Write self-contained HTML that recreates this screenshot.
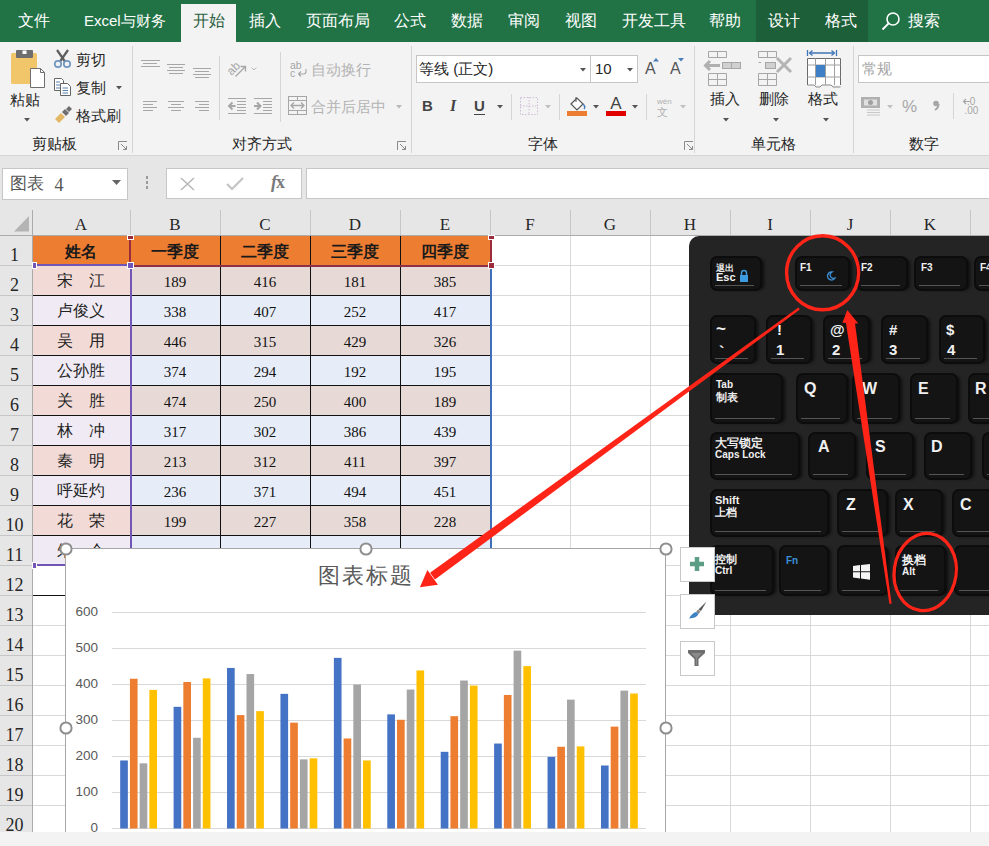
<!DOCTYPE html><html><head><meta charset="utf-8"><style>
body{margin:0;width:989px;height:846px;overflow:hidden;position:relative;background:#fff;font-family:"Liberation Sans",sans-serif}
.a{position:absolute}
.t{white-space:nowrap;line-height:1}
.srf{font-family:"Liberation Serif",serif}
</style></head><body><div class="a" style="left:0px;top:0px;width:989px;height:42px;background:#217346"></div><div class="a" style="left:756px;top:0px;width:112px;height:42px;background:#1d5f39"></div><div class="a" style="left:181px;top:4px;width:55px;height:38px;background:#f3f3f3"></div><div class="a t" style="left:18px;top:12.5px;font-size:15.5px;color:#fff">文件</div><div class="a t" style="left:84px;top:13px;font-size:15px;color:#fff">Excel与财务</div><div class="a t" style="left:193px;top:12.5px;font-size:15.5px;color:#2b5f3f">开始</div><div class="a t" style="left:249px;top:12.5px;font-size:15.5px;color:#fff">插入</div><div class="a t" style="left:306px;top:12.5px;font-size:15.5px;color:#fff">页面布局</div><div class="a t" style="left:394px;top:12.5px;font-size:15.5px;color:#fff">公式</div><div class="a t" style="left:451px;top:12.5px;font-size:15.5px;color:#fff">数据</div><div class="a t" style="left:508px;top:12.5px;font-size:15.5px;color:#fff">审阅</div><div class="a t" style="left:565px;top:12.5px;font-size:15.5px;color:#fff">视图</div><div class="a t" style="left:622px;top:12.5px;font-size:15.5px;color:#fff">开发工具</div><div class="a t" style="left:709px;top:12.5px;font-size:15.5px;color:#fff">帮助</div><div class="a t" style="left:768px;top:12.5px;font-size:15.5px;color:#fff">设计</div><div class="a t" style="left:825px;top:12.5px;font-size:15.5px;color:#fff">格式</div><div class="a t" style="left:908px;top:12.5px;font-size:15.5px;color:#fff">搜索</div><svg class="a" style="left:880px;top:11px" width="22" height="22"><circle cx="13" cy="8" r="6" fill="none" stroke="#fff" stroke-width="1.6"/><line x1="8.5" y1="12.5" x2="2.5" y2="18.5" stroke="#fff" stroke-width="1.8"/></svg><div class="a" style="left:0px;top:42px;width:989px;height:113px;background:#f3f3f3"></div><div class="a" style="left:0px;top:155px;width:989px;height:1px;background:#d6d6d6"></div><div class="a" style="left:132px;top:46px;width:1px;height:107px;background:#d5d5d5"></div><div class="a" style="left:411px;top:46px;width:1px;height:107px;background:#d5d5d5"></div><div class="a" style="left:694px;top:46px;width:1px;height:107px;background:#d5d5d5"></div><div class="a" style="left:853px;top:46px;width:1px;height:107px;background:#d5d5d5"></div><svg class="a" style="left:8px;top:48px" width="40" height="42"><rect x="3" y="5" width="26" height="31" rx="1.5" fill="#f1c66b"/><rect x="8" y="2" width="17" height="8" rx="1" fill="#6e6e6e"/><rect x="14.5" y="2.5" width="4" height="3.5" fill="#fff"/><path d="M22.5 20.5H32.5L36.5 24.5V39.5H22.5Z" fill="#fff" stroke="#6e6e6e"/><path d="M32.5 20.5V24.5H36.5" fill="none" stroke="#6e6e6e"/></svg><div class="a t" style="left:10px;top:92px;font-size:15px;color:#262626">粘贴</div><svg class="a" style="left:24px;top:118px" width="6" height="4"><polygon points="0,0 6,0 3.0,3.5" fill="#555"/></svg><svg class="a" style="left:53px;top:49px" width="19" height="20"><path d="M4 1L12 12.5M15 1L7 12.5" stroke="#5e5e5e" stroke-width="2.2" fill="none"/><circle cx="5" cy="15" r="3.2" fill="none" stroke="#7096c2" stroke-width="1.7"/><circle cx="14" cy="15" r="3.2" fill="none" stroke="#7096c2" stroke-width="1.7"/></svg><div class="a t" style="left:76px;top:52px;font-size:15px;color:#262626">剪切</div><svg class="a" style="left:53px;top:77px" width="20" height="20"><path d="M1.5 1.5H8.5L10.5 3.5V13.5H1.5Z" fill="#fff" stroke="#666"/><path d="M7.5 6.5H14.5L17.5 9.5V18.5H7.5Z" fill="#fff" stroke="#666"/><path d="M3 5H7M3 8H7M3 11H7M9.5 11H15M9.5 13.5H15M9.5 16H15" stroke="#5a7fa8" stroke-width="1"/></svg><div class="a t" style="left:76px;top:80px;font-size:15px;color:#262626">复制</div><svg class="a" style="left:116px;top:86px" width="6" height="4"><polygon points="0,0 6,0 3.0,3.5" fill="#555"/></svg><svg class="a" style="left:54px;top:106px" width="18" height="18"><path d="M1 13L7 7L11 11L5 17Z" fill="#e2b864"/><path d="M8 6L11 3L15 7L12 10Z" fill="#6e6e6e"/><path d="M12 3L15 0L18 3L15 6Z" fill="#6e6e6e"/></svg><div class="a t" style="left:76px;top:107.5px;font-size:15px;color:#262626">格式刷</div><div class="a t" style="left:4.0px;top:136px;width:100px;text-align:center;font-size:15px;color:#262626">剪贴板</div><svg class="a" style="left:118px;top:141px" width="10" height="10"><path d="M0.5 9V0.5H9" fill="none" stroke="#8a8a8a"/><path d="M3 3L8.5 8.5M5 8.5H8.5V5" fill="none" stroke="#8a8a8a"/></svg><div class="a" style="left:141px;top:60px;width:19px;height:1px;background:#a6a6a6"></div><div class="a" style="left:143px;top:63px;width:14px;height:1px;background:#a6a6a6"></div><div class="a" style="left:141px;top:66px;width:19px;height:1px;background:#a6a6a6"></div><div class="a" style="left:167px;top:64px;width:18px;height:1px;background:#a6a6a6"></div><div class="a" style="left:169px;top:67px;width:14px;height:1px;background:#a6a6a6"></div><div class="a" style="left:167px;top:70px;width:18px;height:1px;background:#a6a6a6"></div><div class="a" style="left:169px;top:73px;width:14px;height:1px;background:#a6a6a6"></div><div class="a" style="left:193px;top:68px;width:18px;height:1px;background:#a6a6a6"></div><div class="a" style="left:195px;top:71px;width:14px;height:1px;background:#a6a6a6"></div><div class="a" style="left:193px;top:74px;width:18px;height:1px;background:#a6a6a6"></div><div class="a" style="left:195px;top:77px;width:14px;height:1px;background:#a6a6a6"></div><div class="a" style="left:143px;top:101px;width:14px;height:1px;background:#a6a6a6"></div><div class="a" style="left:143px;top:104px;width:10px;height:1px;background:#a6a6a6"></div><div class="a" style="left:143px;top:107px;width:14px;height:1px;background:#a6a6a6"></div><div class="a" style="left:143px;top:110px;width:10px;height:1px;background:#a6a6a6"></div><div class="a" style="left:168px;top:101px;width:16px;height:1px;background:#a6a6a6"></div><div class="a" style="left:171px;top:104px;width:10px;height:1px;background:#a6a6a6"></div><div class="a" style="left:168px;top:107px;width:16px;height:1px;background:#a6a6a6"></div><div class="a" style="left:171px;top:110px;width:10px;height:1px;background:#a6a6a6"></div><div class="a" style="left:195px;top:101px;width:14px;height:1px;background:#a6a6a6"></div><div class="a" style="left:199px;top:104px;width:10px;height:1px;background:#a6a6a6"></div><div class="a" style="left:195px;top:107px;width:14px;height:1px;background:#a6a6a6"></div><div class="a" style="left:199px;top:110px;width:10px;height:1px;background:#a6a6a6"></div><div class="a" style="left:219px;top:56px;width:1px;height:64px;background:#d5d5d5"></div><div class="a" style="left:280px;top:52px;width:1px;height:70px;background:#d5d5d5"></div><svg class="a" style="left:224px;top:56px" width="26" height="24"><text x="0" y="0" font-size="12" fill="#a6a6a6" font-family="Liberation Sans" transform="translate(7.5 20) rotate(-45)">ab</text><path d="M11.5 20.5L21 11M16.5 10.5H21.5V15.5" stroke="#a6a6a6" stroke-width="1.3" fill="none"/></svg><svg class="a" style="left:251px;top:67px" width="6" height="5"><path d="M0.5 0.5L3 3L5.5 0.5" stroke="#b8b8b8" fill="none"/></svg><svg class="a" style="left:227px;top:97px" width="20" height="18"><path d="M1 1.5H19M10 4.5H19M10 7.5H19M10 10.5H19M10 13.5H19M1 16.5H19" stroke="#a6a6a6"/><path d="M8.5 9H2.5M5.5 5.5L2 9L5.5 12.5" stroke="#a6a6a6" stroke-width="2" fill="none"/></svg><svg class="a" style="left:253px;top:97px" width="20" height="18"><path d="M1 1.5H19M10 4.5H19M10 7.5H19M10 10.5H19M10 13.5H19M1 16.5H19" stroke="#a6a6a6"/><path d="M1 9H7M4 5.5L7.5 9L4 12.5" stroke="#a6a6a6" stroke-width="2" fill="none"/></svg><svg class="a" style="left:289px;top:59px" width="20" height="20"><text x="1" y="9.5" font-size="10.5" fill="#a6a6a6" font-family="Liberation Sans">ab</text><text x="1" y="17.5" font-size="10.5" fill="#a6a6a6" font-family="Liberation Sans">c</text><path d="M17 10V12.5Q17 15 14.5 15H9.5M12 12.5L9.5 15L12 17.5" stroke="#a6a6a6" fill="none" stroke-width="1.1"/></svg><div class="a t" style="left:311px;top:62px;font-size:15px;color:#b3b3b3">自动换行</div><svg class="a" style="left:288px;top:96px" width="20" height="20"><rect x="0.5" y="0.5" width="18" height="18" fill="none" stroke="#a6a6a6"/><path d="M0 4.5H19M0 14.5H19M9.5 0V4.5M9.5 14.5V19" stroke="#a6a6a6"/><path d="M3 9.5H16M6 6.5L3 9.5L6 12.5M13 6.5L16 9.5L13 12.5" stroke="#a6a6a6" fill="none" stroke-width="1.3"/></svg><div class="a t" style="left:311px;top:99px;font-size:15px;color:#b3b3b3">合并后居中</div><svg class="a" style="left:396px;top:105px" width="6" height="4"><polygon points="0,0 6,0 3.0,3.5" fill="#b8b8b8"/></svg><div class="a t" style="left:202.0px;top:136px;width:120px;text-align:center;font-size:15px;color:#262626">对齐方式</div><svg class="a" style="left:397px;top:141px" width="10" height="10"><path d="M0.5 9V0.5H9" fill="none" stroke="#8a8a8a"/><path d="M3 3L8.5 8.5M5 8.5H8.5V5" fill="none" stroke="#8a8a8a"/></svg><div class="a" style="left:416px;top:55px;width:175px;height:28px;background:#fff;border:1px solid #c6c6c6;box-sizing:border-box"></div><div class="a" style="left:591px;top:55px;width:47px;height:28px;background:#fff;border:1px solid #c6c6c6;border-left:none;box-sizing:border-box"></div><div class="a t" style="left:419px;top:61px;font-size:15px;color:#262626">等线 (正文)</div><svg class="a" style="left:580px;top:68px" width="6" height="4"><polygon points="0,0 6,0 3.0,3.5" fill="#555"/></svg><div class="a t" style="left:595px;top:61px;font-size:15px;color:#262626">10</div><svg class="a" style="left:627px;top:68px" width="6" height="4"><polygon points="0,0 6,0 3.0,3.5" fill="#555"/></svg><div class="a t" style="left:645px;top:61px;font-size:16px;color:#555">A</div><div class="a t" style="left:670px;top:61px;font-size:16px;color:#555">A</div><svg class="a" style="left:653px;top:58px" width="6" height="4"><polygon points="0,3.5 6,3.5 3,0" fill="#4a7ebb"/></svg><svg class="a" style="left:678px;top:58px" width="6" height="4"><polygon points="0,0 6,0 3,3.5" fill="#4a7ebb"/></svg><div class="a t" style="left:422px;top:98px;font-size:15px;font-weight:bold;color:#444">B</div><div class="a t" style="left:450px;top:98px;font-size:16px;font-weight:bold;font-style:italic;color:#444;font-family:'Liberation Serif',serif">I</div><div class="a t" style="left:474px;top:98px;font-size:15px;font-weight:bold;color:#444">U</div><div class="a" style="left:474px;top:114px;width:11px;height:1px;background:#444"></div><svg class="a" style="left:497px;top:105px" width="6" height="4"><polygon points="0,0 6,0 3.0,3.5" fill="#555"/></svg><div class="a" style="left:511px;top:94px;width:1px;height:26px;background:#d5d5d5"></div><svg class="a" style="left:520px;top:97px" width="18" height="18"><rect x="0.5" y="0.5" width="17" height="17" fill="none" stroke="#cdbfd7" stroke-dasharray="1.5 1.5"/><path d="M9 0V18M0 9H18" stroke="#cdbfd7" stroke-dasharray="1.5 1.5"/></svg><svg class="a" style="left:545px;top:105px" width="6" height="4"><polygon points="0,0 6,0 3.0,3.5" fill="#c0c0c0"/></svg><div class="a" style="left:559px;top:94px;width:1px;height:26px;background:#d5d5d5"></div><svg class="a" style="left:567px;top:96px" width="22" height="22"><path d="M4 8L10 2L16 8L10 14Z" fill="#fff" stroke="#555" stroke-width="1.2"/><path d="M9 1V6" stroke="#555"/><path d="M16 8Q19 11 17 13" stroke="#4a7ebb" stroke-width="1.5" fill="none"/><rect x="0" y="15" width="20" height="5" fill="#ed7d31"/></svg><svg class="a" style="left:593px;top:105px" width="6" height="4"><polygon points="0,0 6,0 3.0,3.5" fill="#555"/></svg><svg class="a" style="left:606px;top:95px" width="20" height="22"><text x="10" y="14" text-anchor="middle" font-size="17" fill="#444" font-family="Liberation Sans">A</text><rect x="0" y="16" width="20" height="5" fill="#e00000"/></svg><svg class="a" style="left:632px;top:105px" width="6" height="4"><polygon points="0,0 6,0 3.0,3.5" fill="#555"/></svg><div class="a" style="left:646px;top:94px;width:1px;height:26px;background:#d5d5d5"></div><div class="a t" style="left:657px;top:98px;font-size:8px;color:#b0b0b0">wén</div><div class="a t" style="left:657px;top:107px;font-size:11px;color:#b0b0b0">文</div><svg class="a" style="left:680px;top:105px" width="6" height="4"><polygon points="0,0 6,0 3.0,3.5" fill="#c0c0c0"/></svg><div class="a t" style="left:503.0px;top:136px;width:80px;text-align:center;font-size:15px;color:#262626">字体</div><svg class="a" style="left:684px;top:141px" width="10" height="10"><path d="M0.5 9V0.5H9" fill="none" stroke="#8a8a8a"/><path d="M3 3L8.5 8.5M5 8.5H8.5V5" fill="none" stroke="#8a8a8a"/></svg><svg class="a" style="left:700px;top:48px" width="46" height="42"><path d="M8.5 3.5H26.5V9.5H8.5ZM17.5 3.5V9.5" fill="none" stroke="#a6a6a6"/><rect x="22.5" y="14.5" width="18" height="6" fill="#d0d0d0" stroke="#a6a6a6"/><path d="M31.5 14.5V20.5" stroke="#a6a6a6"/><path d="M6 17.5H20M10 13L5.5 17.5L10 22" stroke="#b0b0b0" stroke-width="3" fill="none"/><path d="M8.5 25.5H26.5V37.5H8.5ZM17.5 25.5V37.5M8.5 31.5H26.5" fill="none" stroke="#a6a6a6"/></svg><div class="a t" style="left:710px;top:91px;font-size:15px;color:#262626">插入</div><svg class="a" style="left:723px;top:118px" width="6" height="4"><polygon points="0,0 6,0 3.0,3.5" fill="#555"/></svg><svg class="a" style="left:752px;top:48px" width="46" height="42"><path d="M6.5 3.5H24.5V9.5H6.5ZM15.5 3.5V9.5" fill="none" stroke="#a6a6a6"/><rect x="13.5" y="14.5" width="10" height="6" fill="#d0d0d0" stroke="#a6a6a6"/><path d="M6.5 14.5H9" stroke="#a6a6a6"/><path d="M25 10L39 24M39 10L25 24" stroke="#b4b4b4" stroke-width="3"/><path d="M6.5 25.5H24.5V37.5H6.5ZM15.5 25.5V37.5M6.5 31.5H24.5" fill="none" stroke="#a6a6a6"/></svg><div class="a t" style="left:759px;top:91px;font-size:15px;color:#262626">删除</div><svg class="a" style="left:773px;top:118px" width="6" height="4"><polygon points="0,0 6,0 3.0,3.5" fill="#555"/></svg><svg class="a" style="left:805px;top:48px" width="38" height="42"><path d="M5 5H29M2.5 2V8M31.5 2V8" stroke="#3f74b5" stroke-width="1.3" fill="none"/><path d="M7.5 2.5L4.5 5L7.5 7.5M26.5 2.5L29.5 5L26.5 7.5" stroke="#3f74b5" stroke-width="1.3" fill="none"/><path d="M2.5 37V10.5H35.5V37" fill="#fff" stroke="#6a6a6a"/><path d="M2.5 37H9L11 39H15L17 37H26L28 39H35.5" fill="none" stroke="#8a8a8a"/><path d="M10.5 10.5V37M20.5 10.5V37M29.5 10.5V37M2.5 17H35.5M2.5 29H35.5" stroke="#a0a0a0"/><rect x="11" y="17" width="9" height="12" fill="#3f7fc5"/></svg><div class="a t" style="left:808px;top:91px;font-size:15px;color:#262626">格式</div><svg class="a" style="left:823px;top:118px" width="6" height="4"><polygon points="0,0 6,0 3.0,3.5" fill="#555"/></svg><div class="a t" style="left:723.0px;top:136px;width:100px;text-align:center;font-size:15px;color:#262626">单元格</div><div class="a" style="left:858px;top:55px;width:140px;height:28px;background:#fff;border:1px solid #c6c6c6;box-sizing:border-box"></div><div class="a t" style="left:862px;top:61px;font-size:15px;color:#a6a6a6">常规</div><svg class="a" style="left:861px;top:96px" width="20" height="22"><rect x="0" y="1" width="19" height="11" fill="#b0b0b0"/><rect x="3" y="3.5" width="13" height="6" fill="#e0e0e0"/><circle cx="9.5" cy="6.5" r="2.5" fill="#a0a0a0"/><path d="M6 14H19M6 16.5H19M6 19H19" stroke="#c8c8c8"/></svg><svg class="a" style="left:887px;top:105px" width="6" height="4"><polygon points="0,0 6,0 3.0,3.5" fill="#c0c0c0"/></svg><div class="a t" style="left:902px;top:98px;font-size:17px;color:#a6a6a6">%</div><svg class="a" style="left:932px;top:100px" width="8" height="11"><circle cx="4" cy="3.5" r="2.8" fill="#a6a6a6"/><path d="M6.5 4Q6.5 8 3 10" stroke="#a6a6a6" stroke-width="2" fill="none"/></svg><div class="a" style="left:953px;top:93px;width:1px;height:26px;background:#d5d5d5"></div><svg class="a" style="left:962px;top:97px" width="20" height="18"><text x="5" y="8" font-size="10" fill="#a6a6a6" font-family="Liberation Sans">.0</text><text x="2.5" y="16.5" font-size="10" fill="#a6a6a6" font-family="Liberation Sans">.00</text><path d="M8 4.5H1.5M4 2L1.5 4.5L4 7" stroke="#a6a6a6" stroke-width="1.2" fill="none"/></svg><div class="a t" style="left:884.0px;top:136px;width:80px;text-align:center;font-size:15px;color:#262626">数字</div><div class="a" style="left:0px;top:156px;width:989px;height:79px;background:#e6e6e6"></div><div class="a" style="left:2px;top:168px;width:126px;height:32px;background:#fff;border:1px solid #c6c6c6;box-sizing:border-box"></div><div class="a t" style="left:10px;top:175px;font-size:17px;color:#555">图表</div><div class="a t" style="left:54.5px;top:176px;font-size:18px;color:#555;font-family:'Liberation Serif',serif">4</div><div class="a" style="left:166px;top:168px;width:136px;height:31px;background:#fff;border:1px solid #c6c6c6;box-sizing:border-box"></div><div class="a" style="left:306px;top:168px;width:700px;height:31px;background:#fff;border:1px solid #c6c6c6;box-sizing:border-box"></div><div class="a" style="left:146px;top:176px;width:2px;height:3px;background:#9a9a9a"></div><div class="a" style="left:146px;top:181px;width:2px;height:3px;background:#9a9a9a"></div><div class="a" style="left:146px;top:186px;width:2px;height:3px;background:#9a9a9a"></div><svg class="a" style="left:112px;top:180px" width="10" height="6"><polygon points="0,0 9,0 4.5,5" fill="#666"/></svg><svg class="a" style="left:180px;top:177px" width="16" height="14"><path d="M1 1L14 13M14 1L1 13" stroke="#b8b8b8" stroke-width="1.6"/></svg><svg class="a" style="left:226px;top:177px" width="18" height="14"><path d="M1 7L6 12L17 1" stroke="#c4c4c4" stroke-width="2.2" fill="none"/></svg><div class="a t" style="left:271px;top:173px;font-size:18px;font-weight:bold;color:#7a7a7a;font-family:'Liberation Serif',serif;letter-spacing:-1px"><i>f</i>x</div><div class="a" style="left:0px;top:210px;width:989px;height:25px;background:#e6e6e6"></div><div class="a" style="left:0px;top:235px;width:989px;height:1px;background:#ababab"></div><div class="a t" style="left:51.0px;top:216px;width:60px;text-align:center;font-size:17px;color:#262626;font-family:'Liberation Serif',serif">A</div><div class="a" style="left:130px;top:210px;width:1px;height:25px;background:#c6c6c6"></div><div class="a t" style="left:145.0px;top:216px;width:60px;text-align:center;font-size:17px;color:#262626;font-family:'Liberation Serif',serif">B</div><div class="a" style="left:220px;top:210px;width:1px;height:25px;background:#c6c6c6"></div><div class="a t" style="left:235.0px;top:216px;width:60px;text-align:center;font-size:17px;color:#262626;font-family:'Liberation Serif',serif">C</div><div class="a" style="left:310px;top:210px;width:1px;height:25px;background:#c6c6c6"></div><div class="a t" style="left:325.0px;top:216px;width:60px;text-align:center;font-size:17px;color:#262626;font-family:'Liberation Serif',serif">D</div><div class="a" style="left:400px;top:210px;width:1px;height:25px;background:#c6c6c6"></div><div class="a t" style="left:415.0px;top:216px;width:60px;text-align:center;font-size:17px;color:#262626;font-family:'Liberation Serif',serif">E</div><div class="a" style="left:490px;top:210px;width:1px;height:25px;background:#c6c6c6"></div><div class="a t" style="left:500.0px;top:216px;width:60px;text-align:center;font-size:17px;color:#262626;font-family:'Liberation Serif',serif">F</div><div class="a" style="left:570px;top:210px;width:1px;height:25px;background:#c6c6c6"></div><div class="a t" style="left:580.0px;top:216px;width:60px;text-align:center;font-size:17px;color:#262626;font-family:'Liberation Serif',serif">G</div><div class="a" style="left:650px;top:210px;width:1px;height:25px;background:#c6c6c6"></div><div class="a t" style="left:660.0px;top:216px;width:60px;text-align:center;font-size:17px;color:#262626;font-family:'Liberation Serif',serif">H</div><div class="a" style="left:730px;top:210px;width:1px;height:25px;background:#c6c6c6"></div><div class="a t" style="left:740.0px;top:216px;width:60px;text-align:center;font-size:17px;color:#262626;font-family:'Liberation Serif',serif">I</div><div class="a" style="left:810px;top:210px;width:1px;height:25px;background:#c6c6c6"></div><div class="a t" style="left:820.0px;top:216px;width:60px;text-align:center;font-size:17px;color:#262626;font-family:'Liberation Serif',serif">J</div><div class="a" style="left:890px;top:210px;width:1px;height:25px;background:#c6c6c6"></div><div class="a t" style="left:900.0px;top:216px;width:60px;text-align:center;font-size:17px;color:#262626;font-family:'Liberation Serif',serif">K</div><div class="a" style="left:970px;top:210px;width:1px;height:25px;background:#c6c6c6"></div><div class="a t" style="left:980.0px;top:216px;width:60px;text-align:center;font-size:17px;color:#262626;font-family:'Liberation Serif',serif">L</div><div class="a" style="left:32px;top:210px;width:1px;height:25px;background:#ababab"></div><svg class="a" style="left:14px;top:216px" width="16" height="16"><polygon points="15,0 15,15.5 0,15.5" fill="#b4b4b4"/></svg><div class="a" style="left:0px;top:236px;width:32px;height:596px;background:#e6e6e6"></div><div class="a" style="left:32px;top:236px;width:1px;height:596px;background:#ababab"></div><div class="a" style="left:0px;top:265px;width:32px;height:1px;background:#c6c6c6"></div><div class="a t" style="left:-5.5px;top:246px;width:40px;text-align:center;font-size:18px;color:#262626;font-family:'Liberation Serif',serif">1</div><div class="a" style="left:0px;top:295px;width:32px;height:1px;background:#c6c6c6"></div><div class="a t" style="left:-5.5px;top:276px;width:40px;text-align:center;font-size:18px;color:#262626;font-family:'Liberation Serif',serif">2</div><div class="a" style="left:0px;top:325px;width:32px;height:1px;background:#c6c6c6"></div><div class="a t" style="left:-5.5px;top:306px;width:40px;text-align:center;font-size:18px;color:#262626;font-family:'Liberation Serif',serif">3</div><div class="a" style="left:0px;top:355px;width:32px;height:1px;background:#c6c6c6"></div><div class="a t" style="left:-5.5px;top:336px;width:40px;text-align:center;font-size:18px;color:#262626;font-family:'Liberation Serif',serif">4</div><div class="a" style="left:0px;top:385px;width:32px;height:1px;background:#c6c6c6"></div><div class="a t" style="left:-5.5px;top:366px;width:40px;text-align:center;font-size:18px;color:#262626;font-family:'Liberation Serif',serif">5</div><div class="a" style="left:0px;top:415px;width:32px;height:1px;background:#c6c6c6"></div><div class="a t" style="left:-5.5px;top:396px;width:40px;text-align:center;font-size:18px;color:#262626;font-family:'Liberation Serif',serif">6</div><div class="a" style="left:0px;top:445px;width:32px;height:1px;background:#c6c6c6"></div><div class="a t" style="left:-5.5px;top:426px;width:40px;text-align:center;font-size:18px;color:#262626;font-family:'Liberation Serif',serif">7</div><div class="a" style="left:0px;top:475px;width:32px;height:1px;background:#c6c6c6"></div><div class="a t" style="left:-5.5px;top:456px;width:40px;text-align:center;font-size:18px;color:#262626;font-family:'Liberation Serif',serif">8</div><div class="a" style="left:0px;top:505px;width:32px;height:1px;background:#c6c6c6"></div><div class="a t" style="left:-5.5px;top:486px;width:40px;text-align:center;font-size:18px;color:#262626;font-family:'Liberation Serif',serif">9</div><div class="a" style="left:0px;top:535px;width:32px;height:1px;background:#c6c6c6"></div><div class="a t" style="left:-5.5px;top:516px;width:40px;text-align:center;font-size:18px;color:#262626;font-family:'Liberation Serif',serif">10</div><div class="a" style="left:0px;top:565px;width:32px;height:1px;background:#c6c6c6"></div><div class="a t" style="left:-5.5px;top:546px;width:40px;text-align:center;font-size:18px;color:#262626;font-family:'Liberation Serif',serif">11</div><div class="a" style="left:0px;top:595px;width:32px;height:1px;background:#c6c6c6"></div><div class="a t" style="left:-5.5px;top:576px;width:40px;text-align:center;font-size:18px;color:#262626;font-family:'Liberation Serif',serif">12</div><div class="a" style="left:0px;top:625px;width:32px;height:1px;background:#c6c6c6"></div><div class="a t" style="left:-5.5px;top:606px;width:40px;text-align:center;font-size:18px;color:#262626;font-family:'Liberation Serif',serif">13</div><div class="a" style="left:0px;top:655px;width:32px;height:1px;background:#c6c6c6"></div><div class="a t" style="left:-5.5px;top:636px;width:40px;text-align:center;font-size:18px;color:#262626;font-family:'Liberation Serif',serif">14</div><div class="a" style="left:0px;top:685px;width:32px;height:1px;background:#c6c6c6"></div><div class="a t" style="left:-5.5px;top:666px;width:40px;text-align:center;font-size:18px;color:#262626;font-family:'Liberation Serif',serif">15</div><div class="a" style="left:0px;top:715px;width:32px;height:1px;background:#c6c6c6"></div><div class="a t" style="left:-5.5px;top:696px;width:40px;text-align:center;font-size:18px;color:#262626;font-family:'Liberation Serif',serif">16</div><div class="a" style="left:0px;top:745px;width:32px;height:1px;background:#c6c6c6"></div><div class="a t" style="left:-5.5px;top:726px;width:40px;text-align:center;font-size:18px;color:#262626;font-family:'Liberation Serif',serif">17</div><div class="a" style="left:0px;top:775px;width:32px;height:1px;background:#c6c6c6"></div><div class="a t" style="left:-5.5px;top:756px;width:40px;text-align:center;font-size:18px;color:#262626;font-family:'Liberation Serif',serif">18</div><div class="a" style="left:0px;top:805px;width:32px;height:1px;background:#c6c6c6"></div><div class="a t" style="left:-5.5px;top:786px;width:40px;text-align:center;font-size:18px;color:#262626;font-family:'Liberation Serif',serif">19</div><div class="a" style="left:0px;top:835px;width:32px;height:1px;background:#c6c6c6"></div><div class="a t" style="left:-5.5px;top:816px;width:40px;text-align:center;font-size:18px;color:#262626;font-family:'Liberation Serif',serif">20</div><div class="a" style="left:130px;top:236px;width:1px;height:596px;background:#d9d9d9"></div><div class="a" style="left:220px;top:236px;width:1px;height:596px;background:#d9d9d9"></div><div class="a" style="left:310px;top:236px;width:1px;height:596px;background:#d9d9d9"></div><div class="a" style="left:400px;top:236px;width:1px;height:596px;background:#d9d9d9"></div><div class="a" style="left:490px;top:236px;width:1px;height:596px;background:#d9d9d9"></div><div class="a" style="left:570px;top:236px;width:1px;height:596px;background:#d9d9d9"></div><div class="a" style="left:650px;top:236px;width:1px;height:596px;background:#d9d9d9"></div><div class="a" style="left:730px;top:236px;width:1px;height:596px;background:#d9d9d9"></div><div class="a" style="left:810px;top:236px;width:1px;height:596px;background:#d9d9d9"></div><div class="a" style="left:890px;top:236px;width:1px;height:596px;background:#d9d9d9"></div><div class="a" style="left:970px;top:236px;width:1px;height:596px;background:#d9d9d9"></div><div class="a" style="left:1050px;top:236px;width:1px;height:596px;background:#d9d9d9"></div><div class="a" style="left:33px;top:265px;width:989px;height:1px;background:#d9d9d9"></div><div class="a" style="left:33px;top:295px;width:989px;height:1px;background:#d9d9d9"></div><div class="a" style="left:33px;top:325px;width:989px;height:1px;background:#d9d9d9"></div><div class="a" style="left:33px;top:355px;width:989px;height:1px;background:#d9d9d9"></div><div class="a" style="left:33px;top:385px;width:989px;height:1px;background:#d9d9d9"></div><div class="a" style="left:33px;top:415px;width:989px;height:1px;background:#d9d9d9"></div><div class="a" style="left:33px;top:445px;width:989px;height:1px;background:#d9d9d9"></div><div class="a" style="left:33px;top:475px;width:989px;height:1px;background:#d9d9d9"></div><div class="a" style="left:33px;top:505px;width:989px;height:1px;background:#d9d9d9"></div><div class="a" style="left:33px;top:535px;width:989px;height:1px;background:#d9d9d9"></div><div class="a" style="left:33px;top:565px;width:989px;height:1px;background:#d9d9d9"></div><div class="a" style="left:33px;top:595px;width:989px;height:1px;background:#d9d9d9"></div><div class="a" style="left:33px;top:625px;width:989px;height:1px;background:#d9d9d9"></div><div class="a" style="left:33px;top:655px;width:989px;height:1px;background:#d9d9d9"></div><div class="a" style="left:33px;top:685px;width:989px;height:1px;background:#d9d9d9"></div><div class="a" style="left:33px;top:715px;width:989px;height:1px;background:#d9d9d9"></div><div class="a" style="left:33px;top:745px;width:989px;height:1px;background:#d9d9d9"></div><div class="a" style="left:33px;top:775px;width:989px;height:1px;background:#d9d9d9"></div><div class="a" style="left:33px;top:805px;width:989px;height:1px;background:#d9d9d9"></div><div class="a" style="left:33px;top:835px;width:989px;height:1px;background:#d9d9d9"></div><div class="a" style="left:33px;top:236px;width:457px;height:29px;background:#ed7d31"></div><div class="a t" style="left:36.0px;top:244px;width:90px;text-align:center;font-size:16px;font-weight:bold;color:#1a1a1a">姓名</div><div class="a t" style="left:130.0px;top:244px;width:90px;text-align:center;font-size:16px;font-weight:bold;color:#1a1a1a">一季度</div><div class="a t" style="left:220.0px;top:244px;width:90px;text-align:center;font-size:16px;font-weight:bold;color:#1a1a1a">二季度</div><div class="a t" style="left:310.0px;top:244px;width:90px;text-align:center;font-size:16px;font-weight:bold;color:#1a1a1a">三季度</div><div class="a t" style="left:400.0px;top:244px;width:90px;text-align:center;font-size:16px;font-weight:bold;color:#1a1a1a">四季度</div><div class="a" style="left:33px;top:265px;width:97px;height:30px;background:#f2dbd7"></div><div class="a" style="left:131px;top:265px;width:359px;height:30px;background:#e7dad6"></div><div class="a t" style="left:36.0px;top:273px;width:90px;text-align:center;font-size:16px;color:#222">宋　江</div><div class="a t" style="left:135.0px;top:275px;width:80px;text-align:center;font-size:15px;color:#111;font-family:'Liberation Serif',serif">189</div><div class="a t" style="left:225.0px;top:275px;width:80px;text-align:center;font-size:15px;color:#111;font-family:'Liberation Serif',serif">416</div><div class="a t" style="left:315.0px;top:275px;width:80px;text-align:center;font-size:15px;color:#111;font-family:'Liberation Serif',serif">181</div><div class="a t" style="left:405.0px;top:275px;width:80px;text-align:center;font-size:15px;color:#111;font-family:'Liberation Serif',serif">385</div><div class="a" style="left:33px;top:295px;width:97px;height:30px;background:#efeaf4"></div><div class="a" style="left:131px;top:295px;width:359px;height:30px;background:#e7edf8"></div><div class="a t" style="left:36.0px;top:303px;width:90px;text-align:center;font-size:16px;color:#222">卢俊义</div><div class="a t" style="left:135.0px;top:305px;width:80px;text-align:center;font-size:15px;color:#111;font-family:'Liberation Serif',serif">338</div><div class="a t" style="left:225.0px;top:305px;width:80px;text-align:center;font-size:15px;color:#111;font-family:'Liberation Serif',serif">407</div><div class="a t" style="left:315.0px;top:305px;width:80px;text-align:center;font-size:15px;color:#111;font-family:'Liberation Serif',serif">252</div><div class="a t" style="left:405.0px;top:305px;width:80px;text-align:center;font-size:15px;color:#111;font-family:'Liberation Serif',serif">417</div><div class="a" style="left:33px;top:325px;width:97px;height:30px;background:#f2dbd7"></div><div class="a" style="left:131px;top:325px;width:359px;height:30px;background:#e7dad6"></div><div class="a t" style="left:36.0px;top:333px;width:90px;text-align:center;font-size:16px;color:#222">吴　用</div><div class="a t" style="left:135.0px;top:335px;width:80px;text-align:center;font-size:15px;color:#111;font-family:'Liberation Serif',serif">446</div><div class="a t" style="left:225.0px;top:335px;width:80px;text-align:center;font-size:15px;color:#111;font-family:'Liberation Serif',serif">315</div><div class="a t" style="left:315.0px;top:335px;width:80px;text-align:center;font-size:15px;color:#111;font-family:'Liberation Serif',serif">429</div><div class="a t" style="left:405.0px;top:335px;width:80px;text-align:center;font-size:15px;color:#111;font-family:'Liberation Serif',serif">326</div><div class="a" style="left:33px;top:355px;width:97px;height:30px;background:#efeaf4"></div><div class="a" style="left:131px;top:355px;width:359px;height:30px;background:#e7edf8"></div><div class="a t" style="left:36.0px;top:363px;width:90px;text-align:center;font-size:16px;color:#222">公孙胜</div><div class="a t" style="left:135.0px;top:365px;width:80px;text-align:center;font-size:15px;color:#111;font-family:'Liberation Serif',serif">374</div><div class="a t" style="left:225.0px;top:365px;width:80px;text-align:center;font-size:15px;color:#111;font-family:'Liberation Serif',serif">294</div><div class="a t" style="left:315.0px;top:365px;width:80px;text-align:center;font-size:15px;color:#111;font-family:'Liberation Serif',serif">192</div><div class="a t" style="left:405.0px;top:365px;width:80px;text-align:center;font-size:15px;color:#111;font-family:'Liberation Serif',serif">195</div><div class="a" style="left:33px;top:385px;width:97px;height:30px;background:#f2dbd7"></div><div class="a" style="left:131px;top:385px;width:359px;height:30px;background:#e7dad6"></div><div class="a t" style="left:36.0px;top:393px;width:90px;text-align:center;font-size:16px;color:#222">关　胜</div><div class="a t" style="left:135.0px;top:395px;width:80px;text-align:center;font-size:15px;color:#111;font-family:'Liberation Serif',serif">474</div><div class="a t" style="left:225.0px;top:395px;width:80px;text-align:center;font-size:15px;color:#111;font-family:'Liberation Serif',serif">250</div><div class="a t" style="left:315.0px;top:395px;width:80px;text-align:center;font-size:15px;color:#111;font-family:'Liberation Serif',serif">400</div><div class="a t" style="left:405.0px;top:395px;width:80px;text-align:center;font-size:15px;color:#111;font-family:'Liberation Serif',serif">189</div><div class="a" style="left:33px;top:415px;width:97px;height:30px;background:#efeaf4"></div><div class="a" style="left:131px;top:415px;width:359px;height:30px;background:#e7edf8"></div><div class="a t" style="left:36.0px;top:423px;width:90px;text-align:center;font-size:16px;color:#222">林　冲</div><div class="a t" style="left:135.0px;top:425px;width:80px;text-align:center;font-size:15px;color:#111;font-family:'Liberation Serif',serif">317</div><div class="a t" style="left:225.0px;top:425px;width:80px;text-align:center;font-size:15px;color:#111;font-family:'Liberation Serif',serif">302</div><div class="a t" style="left:315.0px;top:425px;width:80px;text-align:center;font-size:15px;color:#111;font-family:'Liberation Serif',serif">386</div><div class="a t" style="left:405.0px;top:425px;width:80px;text-align:center;font-size:15px;color:#111;font-family:'Liberation Serif',serif">439</div><div class="a" style="left:33px;top:445px;width:97px;height:30px;background:#f2dbd7"></div><div class="a" style="left:131px;top:445px;width:359px;height:30px;background:#e7dad6"></div><div class="a t" style="left:36.0px;top:453px;width:90px;text-align:center;font-size:16px;color:#222">秦　明</div><div class="a t" style="left:135.0px;top:455px;width:80px;text-align:center;font-size:15px;color:#111;font-family:'Liberation Serif',serif">213</div><div class="a t" style="left:225.0px;top:455px;width:80px;text-align:center;font-size:15px;color:#111;font-family:'Liberation Serif',serif">312</div><div class="a t" style="left:315.0px;top:455px;width:80px;text-align:center;font-size:15px;color:#111;font-family:'Liberation Serif',serif">411</div><div class="a t" style="left:405.0px;top:455px;width:80px;text-align:center;font-size:15px;color:#111;font-family:'Liberation Serif',serif">397</div><div class="a" style="left:33px;top:475px;width:97px;height:30px;background:#efeaf4"></div><div class="a" style="left:131px;top:475px;width:359px;height:30px;background:#e7edf8"></div><div class="a t" style="left:36.0px;top:483px;width:90px;text-align:center;font-size:16px;color:#222">呼延灼</div><div class="a t" style="left:135.0px;top:485px;width:80px;text-align:center;font-size:15px;color:#111;font-family:'Liberation Serif',serif">236</div><div class="a t" style="left:225.0px;top:485px;width:80px;text-align:center;font-size:15px;color:#111;font-family:'Liberation Serif',serif">371</div><div class="a t" style="left:315.0px;top:485px;width:80px;text-align:center;font-size:15px;color:#111;font-family:'Liberation Serif',serif">494</div><div class="a t" style="left:405.0px;top:485px;width:80px;text-align:center;font-size:15px;color:#111;font-family:'Liberation Serif',serif">451</div><div class="a" style="left:33px;top:505px;width:97px;height:30px;background:#f2dbd7"></div><div class="a" style="left:131px;top:505px;width:359px;height:30px;background:#e7dad6"></div><div class="a t" style="left:36.0px;top:513px;width:90px;text-align:center;font-size:16px;color:#222">花　荣</div><div class="a t" style="left:135.0px;top:515px;width:80px;text-align:center;font-size:15px;color:#111;font-family:'Liberation Serif',serif">199</div><div class="a t" style="left:225.0px;top:515px;width:80px;text-align:center;font-size:15px;color:#111;font-family:'Liberation Serif',serif">227</div><div class="a t" style="left:315.0px;top:515px;width:80px;text-align:center;font-size:15px;color:#111;font-family:'Liberation Serif',serif">358</div><div class="a t" style="left:405.0px;top:515px;width:80px;text-align:center;font-size:15px;color:#111;font-family:'Liberation Serif',serif">228</div><div class="a" style="left:33px;top:535px;width:97px;height:30px;background:#efeaf4"></div><div class="a" style="left:131px;top:535px;width:359px;height:30px;background:#e7edf8"></div><div class="a t" style="left:36.0px;top:543px;width:90px;text-align:center;font-size:16px;color:#222">朱　仝</div><div class="a" style="left:33px;top:295px;width:457px;height:1px;background:#111"></div><div class="a" style="left:33px;top:325px;width:457px;height:1px;background:#111"></div><div class="a" style="left:33px;top:355px;width:457px;height:1px;background:#111"></div><div class="a" style="left:33px;top:385px;width:457px;height:1px;background:#111"></div><div class="a" style="left:33px;top:415px;width:457px;height:1px;background:#111"></div><div class="a" style="left:33px;top:445px;width:457px;height:1px;background:#111"></div><div class="a" style="left:33px;top:475px;width:457px;height:1px;background:#111"></div><div class="a" style="left:33px;top:505px;width:457px;height:1px;background:#111"></div><div class="a" style="left:33px;top:535px;width:457px;height:1px;background:#111"></div><div class="a" style="left:33px;top:565px;width:457px;height:1px;background:#111"></div><div class="a" style="left:220px;top:236px;width:1px;height:330px;background:#111"></div><div class="a" style="left:310px;top:236px;width:1px;height:330px;background:#111"></div><div class="a" style="left:400px;top:236px;width:1px;height:330px;background:#111"></div><div class="a" style="left:33px;top:264px;width:98px;height:2px;background:#7256b5"></div><div class="a" style="left:131px;top:265px;width:360px;height:2px;background:#8e3047"></div><div class="a" style="left:129px;top:236px;width:2px;height:29px;background:#9b2c3c"></div><div class="a" style="left:130px;top:265px;width:2px;height:300px;background:#7256b5"></div><div class="a" style="left:490px;top:236px;width:2px;height:29px;background:#9b2c3c"></div><div class="a" style="left:490px;top:266px;width:2px;height:300px;background:#3f6fb9"></div><div class="a" style="left:33px;top:564px;width:98px;height:2px;background:#7256b5"></div><div class="a" style="left:33px;top:595px;width:34px;height:1px;background:#111"></div><div class="a" style="left:128px;top:236px;width:5px;height:3px;background:#9b2c3c;outline:1px solid #fff"></div><div class="a" style="left:128px;top:263px;width:5px;height:5px;background:#7256b5;outline:1px solid #fff"></div><div class="a" style="left:489px;top:236px;width:5px;height:3px;background:#9b2c3c;outline:1px solid #fff"></div><div class="a" style="left:489px;top:263px;width:5px;height:5px;background:#9b2c3c;outline:1px solid #fff"></div><div class="a" style="left:33px;top:263px;width:3px;height:5px;background:#7256b5;outline:1px solid #fff"></div><div class="a" style="left:33px;top:563px;width:3px;height:5px;background:#7256b5;outline:1px solid #fff"></div><div class="a" style="left:689px;top:236px;width:320px;height:379px;background:#242424;border-radius:10px 0 0 4px;overflow:hidden"><div class="a" style="left:23px;top:22px;width:48px;height:31px;background:#141414;border-radius:5px;box-shadow:0 0 0 2px #0c0c0c, 4px 1px 3px #0e0e0e"></div><div class="a" style="left:26px;top:49px;width:39px;height:1px;background:#555"></div><div class="a" style="left:108px;top:22px;width:51px;height:31px;background:#141414;border-radius:5px;box-shadow:0 0 0 2px #0c0c0c, 4px 1px 3px #0e0e0e"></div><div class="a" style="left:111px;top:49px;width:42px;height:1px;background:#555"></div><div class="a" style="left:169px;top:22px;width:48px;height:31px;background:#141414;border-radius:5px;box-shadow:0 0 0 2px #0c0c0c, 4px 1px 3px #0e0e0e"></div><div class="a" style="left:172px;top:49px;width:39px;height:1px;background:#555"></div><div class="a" style="left:227px;top:22px;width:50px;height:31px;background:#141414;border-radius:5px;box-shadow:0 0 0 2px #0c0c0c, 4px 1px 3px #0e0e0e"></div><div class="a" style="left:230px;top:49px;width:41px;height:1px;background:#555"></div><div class="a" style="left:287px;top:22px;width:50px;height:31px;background:#141414;border-radius:5px;box-shadow:0 0 0 2px #0c0c0c, 4px 1px 3px #0e0e0e"></div><div class="a" style="left:290px;top:49px;width:41px;height:1px;background:#555"></div><div class="a" style="left:23px;top:81px;width:42px;height:45px;background:#141414;border-radius:5px;box-shadow:0 0 0 2px #0c0c0c, 4px 1px 3px #0e0e0e"></div><div class="a" style="left:26px;top:122px;width:33px;height:1px;background:#555"></div><div class="a" style="left:79px;top:81px;width:42px;height:45px;background:#141414;border-radius:5px;box-shadow:0 0 0 2px #0c0c0c, 4px 1px 3px #0e0e0e"></div><div class="a" style="left:82px;top:122px;width:33px;height:1px;background:#555"></div><div class="a" style="left:136px;top:81px;width:43px;height:45px;background:#141414;border-radius:5px;box-shadow:0 0 0 2px #0c0c0c, 4px 1px 3px #0e0e0e"></div><div class="a" style="left:139px;top:122px;width:34px;height:1px;background:#555"></div><div class="a" style="left:194px;top:81px;width:43px;height:45px;background:#141414;border-radius:5px;box-shadow:0 0 0 2px #0c0c0c, 4px 1px 3px #0e0e0e"></div><div class="a" style="left:197px;top:122px;width:34px;height:1px;background:#555"></div><div class="a" style="left:252px;top:81px;width:42px;height:45px;background:#141414;border-radius:5px;box-shadow:0 0 0 2px #0c0c0c, 4px 1px 3px #0e0e0e"></div><div class="a" style="left:255px;top:122px;width:33px;height:1px;background:#555"></div><div class="a" style="left:23px;top:139px;width:69px;height:47px;background:#141414;border-radius:5px;box-shadow:0 0 0 2px #0c0c0c, 4px 1px 3px #0e0e0e"></div><div class="a" style="left:26px;top:182px;width:60px;height:1px;background:#555"></div><div class="a" style="left:109px;top:139px;width:48px;height:47px;background:#141414;border-radius:5px;box-shadow:0 0 0 2px #0c0c0c, 4px 1px 3px #0e0e0e"></div><div class="a" style="left:112px;top:182px;width:39px;height:1px;background:#555"></div><div class="a" style="left:165px;top:139px;width:44px;height:47px;background:#141414;border-radius:5px;box-shadow:0 0 0 2px #0c0c0c, 4px 1px 3px #0e0e0e"></div><div class="a" style="left:168px;top:182px;width:35px;height:1px;background:#555"></div><div class="a" style="left:223px;top:139px;width:44px;height:47px;background:#141414;border-radius:5px;box-shadow:0 0 0 2px #0c0c0c, 4px 1px 3px #0e0e0e"></div><div class="a" style="left:226px;top:182px;width:35px;height:1px;background:#555"></div><div class="a" style="left:281px;top:139px;width:44px;height:47px;background:#141414;border-radius:5px;box-shadow:0 0 0 2px #0c0c0c, 4px 1px 3px #0e0e0e"></div><div class="a" style="left:284px;top:182px;width:35px;height:1px;background:#555"></div><div class="a" style="left:23px;top:198px;width:86px;height:44px;background:#141414;border-radius:5px;box-shadow:0 0 0 2px #0c0c0c, 4px 1px 3px #0e0e0e"></div><div class="a" style="left:26px;top:238px;width:77px;height:1px;background:#555"></div><div class="a" style="left:121px;top:198px;width:44px;height:44px;background:#141414;border-radius:5px;box-shadow:0 0 0 2px #0c0c0c, 4px 1px 3px #0e0e0e"></div><div class="a" style="left:124px;top:238px;width:35px;height:1px;background:#555"></div><div class="a" style="left:179px;top:198px;width:44px;height:44px;background:#141414;border-radius:5px;box-shadow:0 0 0 2px #0c0c0c, 4px 1px 3px #0e0e0e"></div><div class="a" style="left:182px;top:238px;width:35px;height:1px;background:#555"></div><div class="a" style="left:237px;top:198px;width:44px;height:44px;background:#141414;border-radius:5px;box-shadow:0 0 0 2px #0c0c0c, 4px 1px 3px #0e0e0e"></div><div class="a" style="left:240px;top:238px;width:35px;height:1px;background:#555"></div><div class="a" style="left:295px;top:198px;width:46px;height:44px;background:#141414;border-radius:5px;box-shadow:0 0 0 2px #0c0c0c, 4px 1px 3px #0e0e0e"></div><div class="a" style="left:298px;top:238px;width:37px;height:1px;background:#555"></div><div class="a" style="left:23px;top:255px;width:115px;height:44px;background:#141414;border-radius:5px;box-shadow:0 0 0 2px #0c0c0c, 4px 1px 3px #0e0e0e"></div><div class="a" style="left:26px;top:295px;width:106px;height:1px;background:#555"></div><div class="a" style="left:150px;top:255px;width:47px;height:44px;background:#141414;border-radius:5px;box-shadow:0 0 0 2px #0c0c0c, 4px 1px 3px #0e0e0e"></div><div class="a" style="left:153px;top:295px;width:38px;height:1px;background:#555"></div><div class="a" style="left:208px;top:255px;width:44px;height:44px;background:#141414;border-radius:5px;box-shadow:0 0 0 2px #0c0c0c, 4px 1px 3px #0e0e0e"></div><div class="a" style="left:211px;top:295px;width:35px;height:1px;background:#555"></div><div class="a" style="left:265px;top:255px;width:44px;height:44px;background:#141414;border-radius:5px;box-shadow:0 0 0 2px #0c0c0c, 4px 1px 3px #0e0e0e"></div><div class="a" style="left:268px;top:295px;width:35px;height:1px;background:#555"></div><div class="a" style="left:23px;top:311px;width:60px;height:47px;background:#141414;border-radius:5px;box-shadow:0 0 0 2px #0c0c0c, 4px 1px 3px #0e0e0e"></div><div class="a" style="left:26px;top:354px;width:51px;height:1px;background:#555"></div><div class="a" style="left:92px;top:311px;width:46px;height:47px;background:#141414;border-radius:5px;box-shadow:0 0 0 2px #0c0c0c, 4px 1px 3px #0e0e0e"></div><div class="a" style="left:95px;top:354px;width:37px;height:1px;background:#555"></div><div class="a" style="left:150px;top:311px;width:47px;height:47px;background:#141414;border-radius:5px;box-shadow:0 0 0 2px #0c0c0c, 4px 1px 3px #0e0e0e"></div><div class="a" style="left:153px;top:354px;width:38px;height:1px;background:#555"></div><div class="a" style="left:208px;top:311px;width:47px;height:47px;background:#141414;border-radius:5px;box-shadow:0 0 0 2px #0c0c0c, 4px 1px 3px #0e0e0e"></div><div class="a" style="left:211px;top:354px;width:38px;height:1px;background:#555"></div><div class="a" style="left:267px;top:311px;width:54px;height:47px;background:#141414;border-radius:5px;box-shadow:0 0 0 2px #0c0c0c, 4px 1px 3px #0e0e0e"></div><div class="a" style="left:270px;top:354px;width:45px;height:1px;background:#555"></div><div class="a t" style="left:27px;top:28px;font-size:9px;color:#f0f0f0;font-weight:bold">退出</div><div class="a t" style="left:27px;top:36px;font-size:11px;color:#f0f0f0;font-weight:bold">Esc</div><svg class="a" style="left:50px;top:33px" width="10" height="14"><path d="M2.5 6V4A2.5 2.5 0 0 1 7.5 4V6" stroke="#3d9be0" stroke-width="1.5" fill="none"/><rect x="1" y="6" width="8" height="7" fill="#3d9be0"/></svg><div class="a t" style="left:111px;top:27px;font-size:10px;color:#f0f0f0;font-weight:bold">F1</div><div class="a t" style="left:172px;top:27px;font-size:10px;color:#f0f0f0;font-weight:bold">F2</div><div class="a t" style="left:232px;top:27px;font-size:10px;color:#f0f0f0;font-weight:bold">F3</div><div class="a t" style="left:291px;top:27px;font-size:10px;color:#f0f0f0;font-weight:bold">F4</div><svg class="a" style="left:137px;top:35px" width="10" height="10"><path d="M6 1A4 4 0 1 0 9 7A3.2 3.2 0 0 1 6 1Z" fill="none" stroke="#3d8fd6" stroke-width="1.3"/></svg><div class="a t" style="left:27px;top:84px;font-size:17px;color:#f0f0f0;font-weight:bold">~</div><div class="a t" style="left:30px;top:109px;font-size:16px;color:#f0f0f0;font-weight:bold">`</div><div class="a t" style="left:88px;top:86px;font-size:15px;color:#f0f0f0;font-weight:bold">!</div><div class="a t" style="left:87px;top:106px;font-size:15px;color:#f0f0f0;font-weight:bold">1</div><div class="a t" style="left:141px;top:86px;font-size:15px;color:#f0f0f0;font-weight:bold">@</div><div class="a t" style="left:143px;top:106px;font-size:15px;color:#f0f0f0;font-weight:bold">2</div><div class="a t" style="left:200px;top:86px;font-size:15px;color:#f0f0f0;font-weight:bold">#</div><div class="a t" style="left:200px;top:106px;font-size:15px;color:#f0f0f0;font-weight:bold">3</div><div class="a t" style="left:257px;top:86px;font-size:15px;color:#f0f0f0;font-weight:bold">$</div><div class="a t" style="left:258px;top:106px;font-size:15px;color:#f0f0f0;font-weight:bold">4</div><div class="a t" style="left:27px;top:144px;font-size:10px;color:#f0f0f0;font-weight:bold">Tab</div><div class="a t" style="left:27px;top:156px;font-size:10.5px;color:#f0f0f0;font-weight:bold">制表</div><div class="a t" style="left:115px;top:145px;font-size:16px;color:#f0f0f0;font-weight:bold">Q</div><div class="a t" style="left:173px;top:145px;font-size:16px;color:#f0f0f0;font-weight:bold">W</div><div class="a t" style="left:229px;top:145px;font-size:16px;color:#f0f0f0;font-weight:bold">E</div><div class="a t" style="left:286px;top:145px;font-size:16px;color:#f0f0f0;font-weight:bold">R</div><div class="a t" style="left:26px;top:202px;font-size:11.5px;color:#f0f0f0;font-weight:bold">大写锁定</div><div class="a t" style="left:26px;top:214px;font-size:10px;color:#f0f0f0;font-weight:bold">Caps Lock</div><div class="a t" style="left:129px;top:203px;font-size:16px;color:#f0f0f0;font-weight:bold">A</div><div class="a t" style="left:186px;top:203px;font-size:16px;color:#f0f0f0;font-weight:bold">S</div><div class="a t" style="left:242px;top:203px;font-size:16px;color:#f0f0f0;font-weight:bold">D</div><div class="a t" style="left:301px;top:203px;font-size:16px;color:#f0f0f0;font-weight:bold">F</div><div class="a t" style="left:26px;top:259px;font-size:11px;color:#f0f0f0;font-weight:bold">Shift</div><div class="a t" style="left:26px;top:271px;font-size:11px;color:#f0f0f0;font-weight:bold">上档</div><div class="a t" style="left:157px;top:261px;font-size:16px;color:#f0f0f0;font-weight:bold">Z</div><div class="a t" style="left:214px;top:261px;font-size:16px;color:#f0f0f0;font-weight:bold">X</div><div class="a t" style="left:271px;top:261px;font-size:16px;color:#f0f0f0;font-weight:bold">C</div><div class="a t" style="left:26px;top:318px;font-size:11px;color:#f0f0f0;font-weight:bold">控制</div><div class="a t" style="left:26px;top:330px;font-size:10px;color:#f0f0f0;font-weight:bold">Ctrl</div><div class="a t" style="left:97px;top:320px;font-size:10px;color:#3a8fd8;font-weight:bold">Fn</div><svg class="a" style="left:164px;top:328px" width="18" height="16"><path d="M0 2L7 1V7.3H0ZM8 0.9L17 0V7.3H8ZM0 8.3H7V14.5L0 13.6ZM8 8.3H17V15.8L8 14.6Z" fill="#f4f4f4"/></svg><div class="a t" style="left:213px;top:318px;font-size:12px;color:#f0f0f0;font-weight:bold">换档</div><div class="a t" style="left:213px;top:331px;font-size:10px;color:#f0f0f0;font-weight:bold">Alt</div></div><div class="a" style="left:65px;top:548px;width:601px;height:300px;background:#fff;border:1px solid #a6a6a6;box-sizing:border-box"></div><div class="a t" style="left:265px;top:565px;width:200px;text-align:center;font-size:22px;letter-spacing:2px;text-indent:2px;color:#595959">图表标题</div><div class="a t" style="left:58px;top:821.0px;width:40px;text-align:right;font-size:13.5px;color:#595959">0</div><div class="a t" style="left:58px;top:785.0px;width:40px;text-align:right;font-size:13.5px;color:#595959">100</div><div class="a t" style="left:58px;top:749.0px;width:40px;text-align:right;font-size:13.5px;color:#595959">200</div><div class="a t" style="left:58px;top:713.0px;width:40px;text-align:right;font-size:13.5px;color:#595959">300</div><div class="a t" style="left:58px;top:677.0px;width:40px;text-align:right;font-size:13.5px;color:#595959">400</div><div class="a t" style="left:58px;top:641.0px;width:40px;text-align:right;font-size:13.5px;color:#595959">500</div><div class="a t" style="left:58px;top:605.0px;width:40px;text-align:right;font-size:13.5px;color:#595959">600</div><svg class="a" style="left:0;top:0" width="989" height="846"><line x1="112" y1="828.5" x2="646" y2="828.5" stroke="#d9d9d9" stroke-width="1"/><line x1="112" y1="792.5" x2="646" y2="792.5" stroke="#d9d9d9" stroke-width="1"/><line x1="112" y1="756.5" x2="646" y2="756.5" stroke="#d9d9d9" stroke-width="1"/><line x1="112" y1="720.5" x2="646" y2="720.5" stroke="#d9d9d9" stroke-width="1"/><line x1="112" y1="684.5" x2="646" y2="684.5" stroke="#d9d9d9" stroke-width="1"/><line x1="112" y1="648.5" x2="646" y2="648.5" stroke="#d9d9d9" stroke-width="1"/><line x1="112" y1="612.5" x2="646" y2="612.5" stroke="#d9d9d9" stroke-width="1"/><rect x="120.19" y="760.46" width="7.66" height="68.04" fill="#4472c4"/><rect x="129.92" y="678.74" width="7.66" height="149.76" fill="#ed7d31"/><rect x="139.65" y="763.34" width="7.66" height="65.16" fill="#a5a5a5"/><rect x="149.38" y="689.90" width="7.66" height="138.60" fill="#ffc000"/><rect x="173.61" y="706.82" width="7.66" height="121.68" fill="#4472c4"/><rect x="183.34" y="681.98" width="7.66" height="146.52" fill="#ed7d31"/><rect x="193.07" y="737.78" width="7.66" height="90.72" fill="#a5a5a5"/><rect x="202.80" y="678.38" width="7.66" height="150.12" fill="#ffc000"/><rect x="227.03" y="667.94" width="7.66" height="160.56" fill="#4472c4"/><rect x="236.76" y="715.10" width="7.66" height="113.40" fill="#ed7d31"/><rect x="246.49" y="674.06" width="7.66" height="154.44" fill="#a5a5a5"/><rect x="256.22" y="711.14" width="7.66" height="117.36" fill="#ffc000"/><rect x="280.45" y="693.86" width="7.66" height="134.64" fill="#4472c4"/><rect x="290.18" y="722.66" width="7.66" height="105.84" fill="#ed7d31"/><rect x="299.91" y="759.38" width="7.66" height="69.12" fill="#a5a5a5"/><rect x="309.64" y="758.30" width="7.66" height="70.20" fill="#ffc000"/><rect x="333.87" y="657.86" width="7.66" height="170.64" fill="#4472c4"/><rect x="343.60" y="738.50" width="7.66" height="90.00" fill="#ed7d31"/><rect x="353.33" y="684.50" width="7.66" height="144.00" fill="#a5a5a5"/><rect x="363.06" y="760.46" width="7.66" height="68.04" fill="#ffc000"/><rect x="387.29" y="714.38" width="7.66" height="114.12" fill="#4472c4"/><rect x="397.02" y="719.78" width="7.66" height="108.72" fill="#ed7d31"/><rect x="406.75" y="689.54" width="7.66" height="138.96" fill="#a5a5a5"/><rect x="416.48" y="670.46" width="7.66" height="158.04" fill="#ffc000"/><rect x="440.71" y="751.82" width="7.66" height="76.68" fill="#4472c4"/><rect x="450.44" y="716.18" width="7.66" height="112.32" fill="#ed7d31"/><rect x="460.17" y="680.54" width="7.66" height="147.96" fill="#a5a5a5"/><rect x="469.90" y="685.58" width="7.66" height="142.92" fill="#ffc000"/><rect x="494.13" y="743.54" width="7.66" height="84.96" fill="#4472c4"/><rect x="503.86" y="694.94" width="7.66" height="133.56" fill="#ed7d31"/><rect x="513.59" y="650.66" width="7.66" height="177.84" fill="#a5a5a5"/><rect x="523.32" y="666.14" width="7.66" height="162.36" fill="#ffc000"/><rect x="547.55" y="756.86" width="7.66" height="71.64" fill="#4472c4"/><rect x="557.28" y="746.78" width="7.66" height="81.72" fill="#ed7d31"/><rect x="567.01" y="699.62" width="7.66" height="128.88" fill="#a5a5a5"/><rect x="576.74" y="746.42" width="7.66" height="82.08" fill="#ffc000"/><rect x="600.97" y="765.50" width="7.66" height="63.00" fill="#4472c4"/><rect x="610.70" y="726.62" width="7.66" height="101.88" fill="#ed7d31"/><rect x="620.43" y="690.62" width="7.66" height="137.88" fill="#a5a5a5"/><rect x="630.16" y="693.50" width="7.66" height="135.00" fill="#ffc000"/></svg><svg class="a" style="left:57.5px;top:540.5px" width="16" height="16"><circle cx="8" cy="8" r="5.6" fill="#fff" stroke="#8f8f8f" stroke-width="2"/></svg><svg class="a" style="left:358px;top:540.5px" width="16" height="16"><circle cx="8" cy="8" r="5.6" fill="#fff" stroke="#8f8f8f" stroke-width="2"/></svg><svg class="a" style="left:657.5px;top:540.5px" width="16" height="16"><circle cx="8" cy="8" r="5.6" fill="#fff" stroke="#8f8f8f" stroke-width="2"/></svg><svg class="a" style="left:57.5px;top:720px" width="16" height="16"><circle cx="8" cy="8" r="5.6" fill="#fff" stroke="#8f8f8f" stroke-width="2"/></svg><svg class="a" style="left:657.5px;top:720px" width="16" height="16"><circle cx="8" cy="8" r="5.6" fill="#fff" stroke="#8f8f8f" stroke-width="2"/></svg><div class="a" style="left:680px;top:547px;width:35px;height:35px;background:#fff;border:1px solid #c8c8c8;box-sizing:border-box"></div><div class="a" style="left:680px;top:594px;width:35px;height:35px;background:#fff;border:1px solid #c8c8c8;box-sizing:border-box"></div><div class="a" style="left:680px;top:641px;width:35px;height:35px;background:#fff;border:1px solid #c8c8c8;box-sizing:border-box"></div><svg class="a" style="left:688px;top:555px" width="20" height="20"><path d="M9 2V16M2 9H16" stroke="#5b9d85" stroke-width="4.5"/></svg><svg class="a" style="left:686px;top:599px" width="24" height="24"><path d="M20.5 2.5L15 12L12.5 10.5Z" fill="#555"/><path d="M12 10.5L14.5 12.5L12.5 15L10 13Z" fill="#888"/><path d="M10 13L12.5 15Q11 19 3 19.5Q6 14 10 13Z" fill="#3e82c4"/></svg><svg class="a" style="left:687px;top:649px" width="20" height="20"><path d="M1 1H18V4L11.5 10V17H7.5V10L1 4Z" fill="#6d6d6d"/><path d="M4 4H15L10 9V16H9V9Z" fill="#8a8a8a"/></svg><svg class="a" style="left:0;top:0" width="989" height="846"><ellipse cx="822.6" cy="272.8" rx="36" ry="37" fill="none" stroke="#ff2418" stroke-width="3.4"/><ellipse cx="925.2" cy="572" rx="31" ry="38.8" fill="none" stroke="#ff2418" stroke-width="3.2" transform="rotate(8 925.2 572)"/><polygon points="798.4,307.5 799.8,309.6 434.96,579.55 430.04,572.85" fill="#ff2418"/><polygon points="419.9,587.2 427.4,570.1 432.7,577.4 438,584.7" fill="#ff2418"/><polygon points="847.3,309.9 842.4,322.7 858.3,323.4" fill="#ff2418"/><polygon points="845.8,322 854.8,321.5 891.6,603.7 889.4,603.8" fill="#ff2418"/></svg><div class="a" style="left:0px;top:832px;width:989px;height:14px;background:#f3f3f3"></div></body></html>
